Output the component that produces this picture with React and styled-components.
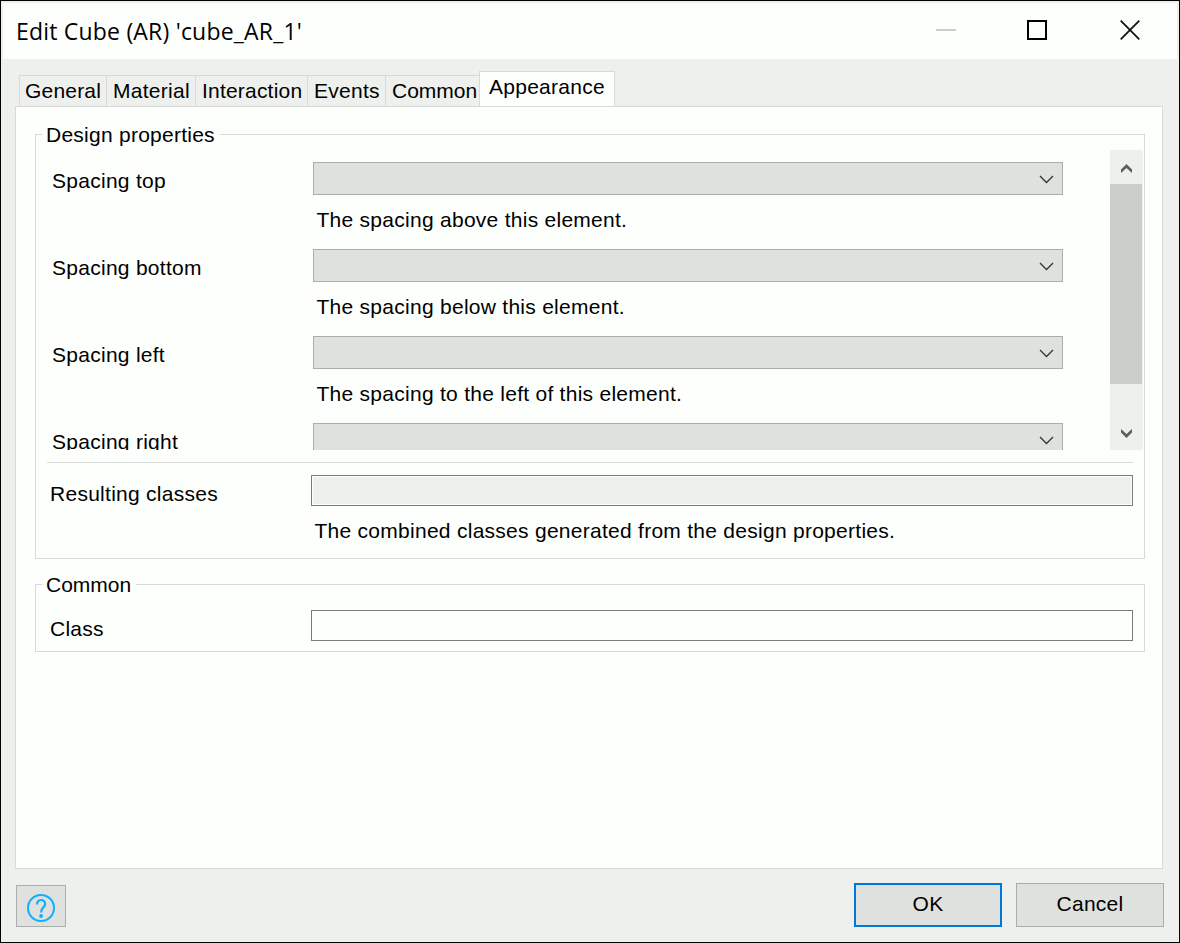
import React from "react";
import styled, { createGlobalStyle, css } from "styled-components";

const c = {
  white: "#fdfffc",
  face: "#eef0ed",
  button: "#dfe1de",
  line: "#d8dad7",
  control: "#abadaa",
  field: "#7a7c79",
  thumb: "#cbcdca",
  accent: "#0078d7",
  help: "#12aeff",
};

const GlobalStyle = createGlobalStyle`
  *, *::before, *::after { box-sizing: border-box; }
  body { margin: 0; background: ${c.face}; }
  button, input { font: inherit; letter-spacing: inherit; color: inherit; border-radius: 0; }
`;

const Window = styled.div`
  display: flex;
  flex-direction: column;
  width: 1180px;
  height: 943px;
  padding: 2px;
  border: 1px solid #000;
  background: ${c.face};
  color: #000;
  font: 21px/25px "Liberation Sans", Arial, sans-serif;
  letter-spacing: 0.27px;
`;

const TitleBar = styled.header`
  display: flex;
  align-items: center;
  height: 56px;
  padding-left: 13px;
  background: ${c.white};
`;

const Title = styled.h1`
  flex: 1;
  margin: 0;
  font: 400 23px/30px "Open Sans", sans-serif;
  letter-spacing: 0.2px;
`;

const CaptionButton = styled.button`
  display: flex;
  align-items: center;
  justify-content: center;
  width: ${(p) => p.$width}px;
  height: 56px;
  padding: 0 0 2px;
  border: 0;
  background: none;
`;

const Body = styled.main`
  display: flex;
  flex-direction: column;
  padding: 12px 14px 0 12px;
`;

const TabList = styled.div`
  display: flex;
  align-items: flex-end;
  height: 36px;
  margin-bottom: -1px;
  padding-left: 4px;
`;

const Tab = styled.button`
  width: ${(p) => p.$width}px;
  height: 32px;
  padding: 0 0 2px ${(p) => p.$inset}px;
  border: 1px solid ${c.line};
  border-right: 0;
  background: ${c.face};
  letter-spacing: ${(p) => p.$spacing}px;
  text-align: left;
  white-space: nowrap;
  ${(p) =>
    p.$active &&
    css`
      height: 36px;
      padding-bottom: 6px;
      border-right: 1px solid ${c.line};
      border-bottom: 0;
      background: ${c.white};
    `}
`;

const Panel = styled.section`
  height: 763px;
  padding: 15px 17px 0 19px;
  border: 1px solid ${c.line};
  background: ${c.white};
`;

const Group = styled.fieldset`
  height: ${(p) => p.$height}px;
  min-width: 0;
  margin: 0 0 13px;
  padding: 0 0 0 6px;
  border: 1px solid ${c.line};
`;

const Legend = styled.legend`
  height: 25px;
  padding: 0 5px 0 4px;
  letter-spacing: ${(p) => p.$spacing}px;
`;

const ScrollArea = styled.div`
  display: flex;
  justify-content: space-between;
  height: 300px;
  margin: 3px 1px 0 0;
  overflow: hidden;
`;

const PropertyList = styled.div`
  padding-top: 12px;
`;

const PropertyRow = styled.div`
  display: grid;
  grid-template-columns: 271px 750px;
  grid-template-rows: 33px 54px;
`;

const RowLabel = styled.label`
  padding: 6px 0 0 ${(p) => p.$inset}px;
`;

const Hint = styled.p`
  grid-column: 2;
  margin: 0;
  padding: 12px 0 0 3.5px;
`;

const Select = styled.button`
  display: flex;
  align-items: center;
  justify-content: flex-end;
  height: 33px;
  padding: 1px 8px 0 0;
  border: 1px solid ${c.control};
  background: ${c.button};
`;

const ScrollBar = styled.div`
  display: flex;
  flex-direction: column;
  width: 33px;
  background: ${c.face};
`;

const ScrollButton = styled.div`
  display: flex;
  align-items: center;
  justify-content: center;
  height: 34px;
  padding-top: ${(p) => p.$top}px;
`;

const ScrollThumb = styled.div`
  width: 32px;
  height: 200px;
  margin-bottom: 32px;
  background: ${c.thumb};
`;

const Divider = styled.hr`
  height: 1px;
  margin: 12px 11px 12px 5px;
  border: 0;
  background: ${c.line};
`;

const FieldRow = styled.div`
  display: grid;
  grid-template-columns: 269px 822px;
  grid-template-rows: 31px;
  margin-top: ${(p) => p.$gap || 0}px;
`;

const TextField = styled.input`
  width: 822px;
  height: 31px;
  padding: 1px;
  border: 1px solid ${c.field};
  outline: 0;
  background: ${(p) => (p.readOnly ? c.face : c.white)};
  background-clip: content-box;
`;

const Footer = styled.footer`
  display: flex;
  align-items: flex-start;
  gap: 14px;
  padding: 14px 13px 0;
`;

const HelpButton = styled.button`
  display: flex;
  align-items: center;
  justify-content: center;
  width: 50px;
  height: 42px;
  margin: 2px auto 0 0;
  padding: 4px 0 0;
  border: 1px solid ${c.control};
  background: ${c.button};
`;

const DialogButton = styled.button`
  width: 148px;
  height: 44px;
  padding: 0 0 4px;
  border: ${(p) => (p.$default ? `2px solid ${c.accent}` : `1px solid ${c.control}`)};
  background: ${c.button};
`;

const Chevron = () => (
  <svg width="15" height="9" viewBox="0 0 15 9" fill="none" stroke="#333" strokeWidth="1.3">
    <path d="M1 1l6.5 6.5L14 1" />
  </svg>
);

const ScrollArrow = ({ down }) => (
  <svg width="11" height="9" viewBox="0 0 11 9" fill="#5d5f5c">
    <path d={down ? "M0 0L5.5 5L11 0V3.5L5.5 9L0 3.5z" : "M0 9L5.5 4L11 9V5.5L5.5 0L0 5.5z"} />
  </svg>
);

const tabs = [
  { name: "General", width: 87, inset: 5, spacing: 0.2 },
  { name: "Material", width: 89, inset: 6, spacing: 0.27 },
  { name: "Interaction", width: 112, inset: 6, spacing: 0.2 },
  { name: "Events", width: 78, inset: 6, spacing: 0.27 },
  { name: "Common", width: 94, inset: 6, spacing: 0 },
  { name: "Appearance", width: 136, inset: 9, spacing: 0.27 },
];

const properties = [
  { name: "Spacing top", hint: "The spacing above this element." },
  { name: "Spacing bottom", hint: "The spacing below this element." },
  { name: "Spacing left", hint: "The spacing to the left of this element." },
  { name: "Spacing right", hint: "" },
];

export default function App() {
  return (
    <>
      <GlobalStyle />
      <Window>
        <TitleBar>
          <Title>Edit Cube (AR) 'cube_AR_1'</Title>
          <CaptionButton $width={90} aria-label="Minimize" disabled>
            <svg width="20" height="20" viewBox="0 0 20 20">
              <path d="M0 10h20" stroke="#cbcdca" strokeWidth="2" />
            </svg>
          </CaptionButton>
          <CaptionButton $width={92} aria-label="Maximize">
            <svg width="20" height="20" viewBox="0 0 20 20">
              <path d="M1 1h18v18H1z" fill="none" stroke="#000" strokeWidth="2" />
            </svg>
          </CaptionButton>
          <CaptionButton $width={94} aria-label="Close">
            <svg width="20" height="20" viewBox="0 0 20 20">
              <path d="M.7 .7l18.6 18.6M19.3 .7L.7 19.3" stroke="#111" strokeWidth="1.8" />
            </svg>
          </CaptionButton>
        </TitleBar>
        <Body>
          <TabList>
            {tabs.map((t) => (
              <Tab
                key={t.name}
                $width={t.width}
                $inset={t.inset}
                $spacing={t.spacing}
                $active={t.name === "Appearance"}
              >
                {t.name}
              </Tab>
            ))}
          </TabList>
          <Panel>
            <Group $height={437}>
              <Legend $spacing={0.25}>Design properties</Legend>
              <ScrollArea>
                <PropertyList>
                  {properties.map((p) => (
                    <PropertyRow key={p.name}>
                      <RowLabel $inset={10}>{p.name}</RowLabel>
                      <Select aria-label={p.name}>
                        <Chevron />
                      </Select>
                      <Hint>{p.hint}</Hint>
                    </PropertyRow>
                  ))}
                </PropertyList>
                <ScrollBar>
                  <ScrollButton $top={3}>
                    <ScrollArrow />
                  </ScrollButton>
                  <ScrollThumb />
                  <ScrollButton $top={1}>
                    <ScrollArrow down />
                  </ScrollButton>
                </ScrollBar>
              </ScrollArea>
              <Divider />
              <FieldRow>
                <RowLabel $inset={8}>Resulting classes</RowLabel>
                <TextField readOnly />
                <Hint>The combined classes generated from the design properties.</Hint>
              </FieldRow>
            </Group>
            <Group $height={80}>
              <Legend $spacing={0}>Common</Legend>
              <FieldRow $gap={13}>
                <RowLabel $inset={8}>Class</RowLabel>
                <TextField />
              </FieldRow>
            </Group>
          </Panel>
        </Body>
        <Footer>
          <HelpButton aria-label="Help">
            <svg width="28" height="28" viewBox="0 0 28 28" fill="none" stroke={c.help}>
              <circle cx="14" cy="14" r="13" strokeWidth="2" />
              <path d="M10 10.5C10 4.6 18.2 4.6 18.2 10C18.2 13.4 14.1 13 14.1 18.5" strokeWidth="2.2" />
              <circle cx="14.1" cy="22" r="1.9" fill={c.help} stroke="none" />
            </svg>
          </HelpButton>
          <DialogButton $default>OK</DialogButton>
          <DialogButton>Cancel</DialogButton>
        </Footer>
      </Window>
    </>
  );
}
